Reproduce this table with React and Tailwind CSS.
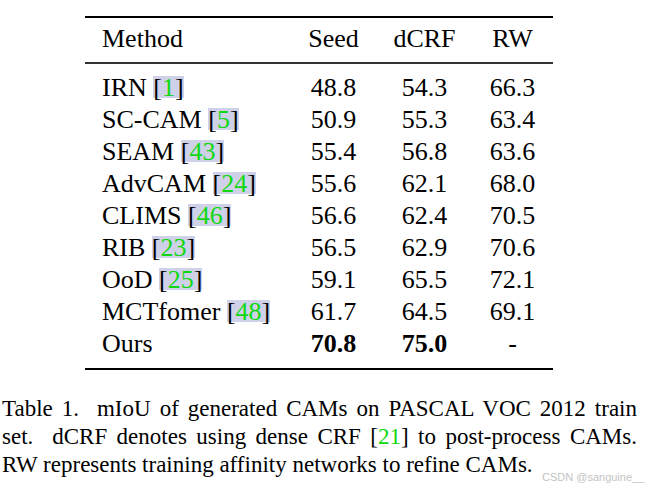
import React from 'react';

const rows = [
  { name: "IRN", cite: "1", seed: "48.8", dcrf: "54.3", rw: "66.3" },
  { name: "SC-CAM", cite: "5", seed: "50.9", dcrf: "55.3", rw: "63.4" },
  { name: "SEAM", cite: "43", seed: "55.4", dcrf: "56.8", rw: "63.6" },
  { name: "AdvCAM", cite: "24", seed: "55.6", dcrf: "62.1", rw: "68.0" },
  { name: "CLIMS", cite: "46", seed: "56.6", dcrf: "62.4", rw: "70.5" },
  { name: "RIB", cite: "23", seed: "56.5", dcrf: "62.9", rw: "70.6" },
  { name: "OoD", cite: "25", seed: "59.1", dcrf: "65.5", rw: "72.1" },
  { name: "MCTfomer", cite: "48", seed: "61.7", dcrf: "64.5", rw: "69.1" },
];

function Cite({ n }) {
  return (
    <span className="inline-block h-[22px] leading-[24px] bg-[#cfd1e8] text-black">
      [<span className="text-[#10d810]">{n}</span>]
    </span>
  );
}

function Row({ children, seed, dcrf, rw, bold }) {
  return (
    <div className="flex h-[32px] leading-[32px]">
      <div className="w-[205px] pl-[17px] whitespace-nowrap">{children}</div>
      <div className={"w-[87px] text-center " + (bold ? "font-bold" : "")}>{seed}</div>
      <div className={"w-[95px] text-center " + (bold ? "font-bold" : "")}>{dcrf}</div>
      <div className="w-[81px] text-center">{rw}</div>
    </div>
  );
}

export default function App() {
  return (
    <div className="relative w-[647px] h-[487px] bg-white text-black font-['Liberation_Serif',serif] overflow-hidden">
      {/* Table */}
      <div className="ml-[85px] w-[468px] pt-[16px] text-[26px]">
        <div className="h-[2px] bg-black" />
        <div className="pt-[5px] pb-[7px]">
          <Row seed="Seed" dcrf="dCRF" rw="RW">Method</Row>
        </div>
        <div className="h-[2px] bg-[#333]" />
        <div className="pt-[8px] pb-[8px]">
          {rows.map((r) => (
            <Row key={r.name} seed={r.seed} dcrf={r.dcrf} rw={r.rw}>
              {r.name} <Cite n={r.cite} />
            </Row>
          ))}
          <Row seed="70.8" dcrf="75.0" rw="-" bold>Ours</Row>
        </div>
        <div className="h-[2px] bg-black" />
      </div>

      {/* Caption */}
      <div className="mt-[25px] ml-[2px] w-[635px] text-[23px] leading-[28px] whitespace-nowrap">
        <div className="text-justify [text-align-last:justify]">
          <span>Table 1.&nbsp; mIoU of generated CAMs on PASCAL VOC 2012 train</span>
        </div>
        <div className="text-justify [text-align-last:justify]">
          <span>set.&nbsp; dCRF denotes using dense CRF [</span><span className="text-[#10d810]">21</span><span>] to post-process CAMs.</span>
        </div>
        <div>RW represents training affinity networks to refine CAMs.</div>
      </div>

      {/* watermark */}
      <div className="absolute left-[542px] top-[470px] text-[11px] leading-[14px] text-[#c4c4c4] font-['Liberation_Sans',sans-serif] whitespace-nowrap">
        CSDN @sanguine__
      </div>
    </div>
  );
}
